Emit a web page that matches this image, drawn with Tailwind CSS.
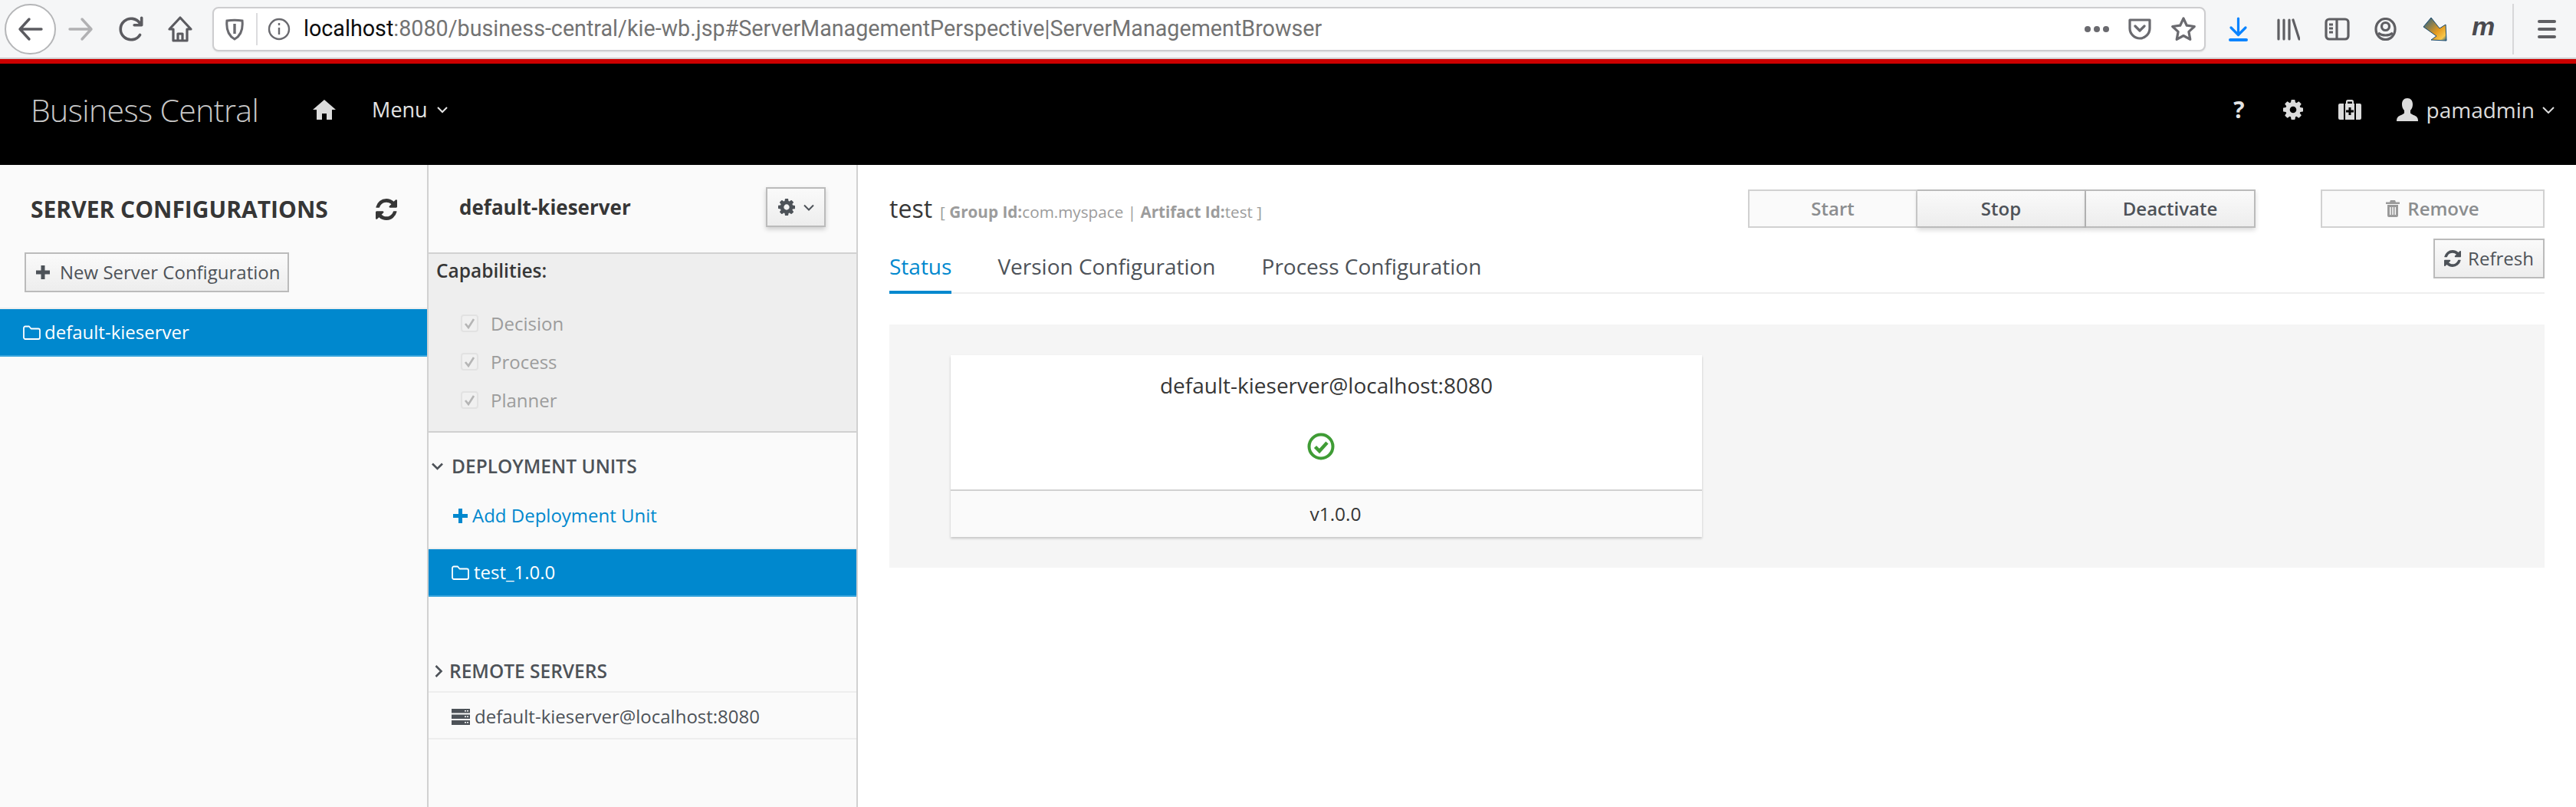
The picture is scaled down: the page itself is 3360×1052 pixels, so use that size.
<!DOCTYPE html>
<html lang="en">
<head>
  <meta charset="UTF-8">
  <title>Business Central</title>
  <script src="https://cdn.jsdelivr.net/npm/@tailwindcss/browser@4"></script>
</head>
<body class="w-[3360px] h-[1052px] overflow-hidden bg-white font-['Open_Sans',sans-serif] text-[#363636]">

  <!-- Browser toolbar -->
  <div class="h-[75px] bg-[#f5f6f7] flex items-center relative">
    <div class="ml-[6px] w-[67px] h-[66px] rounded-full border-2 border-[#b5b6b8] bg-white flex items-center justify-center">
      <svg class="w-[34px] h-[34px]" viewBox="0 0 34 34" fill="none" stroke="#5b5b60" stroke-width="3.4" stroke-linecap="round" stroke-linejoin="round"><path d="M31 17H3M15 4L3 17l12 13"/></svg>
    </div>
    <svg class="ml-[15px] w-[34px] h-[34px]" viewBox="0 0 34 34" fill="none" stroke="#b1b1b3" stroke-width="3.4" stroke-linecap="round" stroke-linejoin="round"><path d="M3 17h28M19 4l12 13-12 13"/></svg>
    <svg class="ml-[32px] w-[36px] h-[36px]" viewBox="0 0 34 34" fill="none" stroke="#5b5b60" stroke-width="3.4" stroke-linecap="round" stroke-linejoin="round"><path d="M27 24a13 13 0 1 1 0-14"/><path d="M29 3v9H20" /></svg>
    <svg class="ml-[28px] w-[34px] h-[36px]" viewBox="0 0 34 36" fill="none" stroke="#5b5b60" stroke-width="3.2" stroke-linejoin="round"><path d="M17 3L3 18h5v15h18V18h5z"/><path d="M14 33V24h6v9" /></svg>
    <div class="ml-[25px] w-[2600px] h-[58px] rounded-[8px] border-2 border-[#cdcdcf] bg-white flex items-center shadow-[0_1px_2px_rgba(0,0,0,0.08)]">
      <svg class="ml-[14px] w-[26px] h-[30px]" viewBox="0 0 26 30" fill="none" stroke="#6a6a6f" stroke-width="3"><path d="M3 4c6-1 14-1 20 0 1 10-1 19-10 24C4 23 2 14 3 4z"/><path d="M13 8v13" stroke-width="3.4"/></svg>
      <div class="ml-[15px] w-[2px] h-[42px] bg-[#dcdcde]"></div>
      <svg class="ml-[13px] w-[30px] h-[30px]" viewBox="0 0 30 30" fill="none" stroke="#6a6a6f" stroke-width="2.4"><circle cx="15" cy="15" r="13"/><path d="M15 13v9M15 7v3"/></svg>
      <div class="ml-[17px] text-[28.7px] font-['Roboto',sans-serif] text-[#737373] whitespace-nowrap"><span class="text-[#0c0c0d]">localhost</span>:8080/business-central/kie-wb.jsp#ServerManagementPerspective|ServerManagementBrowser</div>
      <div class="ml-auto flex items-center">
        <div class="flex gap-[4px]"><span class="w-[8px] h-[8px] rounded-full bg-[#6a6a6f]"></span><span class="w-[8px] h-[8px] rounded-full bg-[#6a6a6f]"></span><span class="w-[8px] h-[8px] rounded-full bg-[#6a6a6f]"></span></div>
        <svg class="ml-[24px] w-[32px] h-[30px]" viewBox="0 0 32 30" fill="none" stroke="#6a6a6f" stroke-width="3.2" stroke-linejoin="round" stroke-linecap="round"><path d="M3 3h26v11c0 7-6 13-13 13S3 21 3 14z"/><path d="M10 11l6 6 6-6"/></svg>
        <svg class="ml-[24px] mr-[10px] w-[34px] h-[34px]" viewBox="0 0 34 34" fill="none" stroke="#6a6a6f" stroke-width="3.2" stroke-linejoin="round"><path d="M17 3l4.3 9.2 10 1.3-7.4 6.9 1.9 10L17 25.500l-8.800 4.900 1.900-10-7.400-6.900 10-1.300z"/></svg>
      </div>
    </div>
    <div class="ml-[30px] flex items-center">
      <svg class="w-[25px] h-[32px]" viewBox="0 0 25 32" fill="none" stroke="#0a84ff" stroke-width="3.2" stroke-linecap="round" stroke-linejoin="round"><path d="M12.500 2v21M3 14l9.500 9.500L22 14"/><path d="M2 30h21" stroke-width="4"/></svg>
      <svg class="ml-[38px] w-[30px] h-[30px]" viewBox="0 0 30 30" fill="none" stroke="#5f5f63" stroke-width="3.200" stroke-linecap="round"><path d="M2 3v25M9 3v25M16 3v25M21 3l8 25"/></svg>
      <svg class="ml-[32px] w-[33px] h-[30px]" viewBox="0 0 33 30" fill="none" stroke="#5f5f63" stroke-width="3.200"><rect x="2" y="2" width="29" height="26" rx="4"/><path d="M16 2v26M6 9h5M6 14h5M6 19h5"/></svg>
      <svg class="ml-[32px] w-[29px] h-[30px]" viewBox="0 0 29 30" fill="none" stroke="#5f5f63" stroke-width="3.200"><ellipse cx="14.500" cy="15" rx="12.500" ry="13.500"/><circle cx="14.500" cy="11.500" r="5"/><path d="M5 20c5 4 14 4 19 0"/></svg>
      <svg class="ml-[34px] w-[32px] h-[32px]" viewBox="0 0 32 32"><defs><linearGradient id="ext" x1="0" y1="0" x2="1" y2="1"><stop offset="0" stop-color="#1c5d8a"/><stop offset="0.6" stop-color="#e59a1e"/><stop offset="0.85" stop-color="#f7c64a"/><stop offset="1" stop-color="#1c5d8a"/></linearGradient></defs><path d="M1 13L11 1l11 14 8-5 1 21-20-1 7-5z" fill="url(#ext)" stroke="#174a72" stroke-width="1"/></svg>
      <div class="ml-[32px] w-[32px] text-[34px] leading-none font-bold italic text-[#4a4a4f] font-['Liberation_Sans',sans-serif] -mt-[8px]">m</div>
      <div class="ml-[21px] w-[2px] h-[66px] bg-[#d7d7d9]"></div>
      <div class="ml-[31px] w-[24px] flex flex-col gap-[6px]"><span class="h-[4px] rounded bg-[#5f5f63]"></span><span class="h-[4px] rounded bg-[#5f5f63]"></span><span class="h-[4px] rounded bg-[#5f5f63]"></span></div>
    </div>
  </div>
  <div class="h-[2px] bg-[#cfcfd1]"></div>
  <div class="h-[6px] bg-[#cc0000]"></div>

  <!-- App header -->
  <div class="h-[132px] pb-[12px] bg-black flex items-center text-[#d1d1d1]">
    <div class="ml-[40px] text-[41px] font-light tracking-[-0.6px] leading-none text-[#c9c9c9]">Business Central</div>
    <svg class="ml-[71px] w-[30px] h-[26px]" viewBox="0 0 30 26" fill="#dcdcdc"><path d="M15 0L0 13h5v13h7v-8h6v8h7V13h5z"/></svg>
    <div class="ml-[47px] text-[27px] text-[#e4e4e4]">Menu</div>
    <svg class="ml-[12px] w-[14px] h-[10px]" viewBox="0 0 14 10" fill="none" stroke="#e4e4e4" stroke-width="2"><path d="M1 2l6 6 6-6"/></svg>
    <div class="ml-auto flex items-center">
      <div class="text-[30px] font-bold leading-none text-[#e4e4e4]">?</div>
      <svg class="ml-[50px] w-[26px] h-[26px]" viewBox="128 128 1536 1536" fill="#dcdcdc"><path d="M1152 896q0-106-75-181t-181-75-181 75-75 181 75 181 181 75 181-75 75-181zm512-109v222q0 12-8 23t-20 13l-185 28q-19 54-39 91 35 50 107 138 10 12 10 25t-9 23q-27 37-99 108t-94 71q-12 0-26-9l-138-108q-44 23-91 38-16 136-29 186-7 28-36 28h-222q-14 0-24.5-8.5t-11.5-21.5l-28-184q-49-16-90-37l-141 107q-10 9-25 9-14 0-25-11-126-114-165-168-7-10-7-23 0-12 8-23 15-21 51-66.5t54-70.5q-27-50-41-99l-183-27q-13-2-21-12.5t-8-23.5v-222q0-12 8-23t19-13l186-28q14-46 39-92-40-57-107-138-10-12-10-24 0-10 9-23 26-36 98.5-107.5t94.5-71.5q13 0 26 10l138 107q44-23 91-38 16-136 29-186 7-28 36-28h222q14 0 24.5 8.5t11.5 21.5l28 184q49 16 90 37l142-107q9-9 24-9 13 0 25 10 129 119 165 170 7 8 7 22 0 12-8 23-15 21-51 66.5t-54 70.5q26 50 41 98l183 28q13 2 21 12.5t8 23.5z"/></svg>
      <svg class="ml-[46px] w-[30px] h-[26px]" viewBox="0 0 30 26" fill="#dcdcdc"><path d="M10 5V2.500A2.500 2.500 0 0 1 12.500 0h5A2.500 2.500 0 0 1 20 2.500V5h1v21H9V5zM12 5h6V2.500h-6zM2 5h5v21H2a2 2 0 0 1-2-2V7a2 2 0 0 1 2-2zM23 5h5a2 2 0 0 1 2 2v17a2 2 0 0 1-2 2h-5z"/><path d="M13.500 10h3v3.500H20v3h-3.500V20h-3v-3.500H10v-3h3.500z" fill="#000"/></svg>
      <svg class="ml-[46px] w-[28px] h-[30px]" viewBox="0 0 28 30" fill="#dcdcdc"><path d="M14 0c4.500 0 7 3 7 8 0 3-1 6-3 8v3c0 1 1 1.500 4 3 4 1.500 6 3 6 8H0c0-5 2-6.500 6-8 3-1.500 4-2 4-3v-3c-2-2-3-5-3-8 0-5 2.500-8 7-8z"/></svg>
      <div class="ml-[11px] text-[28px] text-[#dcdcdc]">pamadmin</div>
      <svg class="ml-[10px] mr-[28px] w-[16px] h-[10px]" viewBox="0 0 16 10" fill="none" stroke="#dcdcdc" stroke-width="2"><path d="M1 2l7 7 7-7"/></svg>
    </div>
  </div>

  <div class="flex h-[837px]">
    <!-- Server list -->
    <div class="w-[559px] shrink-0 bg-[#fafafa] border-r-2 border-[#d1d1d1]">
      <div class="h-[114px] flex items-center pl-[40px] pr-[39px] pt-[2px]">
        <div class="text-[30px] font-bold leading-none">SERVER CONFIGURATIONS</div>
        <svg class="ml-auto w-[28px] h-[28px]" viewBox="128 128 1536 1536" fill="#363636"><path d="M1639 1056q0 5-1 7-64 268-268 434.5t-478 166.5q-146 0-282.5-55t-243.5-157l-129 129q-19 19-45 19t-45-19-19-45v-448q0-26 19-45t45-19h448q26 0 45 19t19 45-19 45l-137 137q71 66 161 102t187 36q134 0 250-65t186-179q11-17 53-117 8-23 30-23h192q13 0 22.5 9.5t9.5 22.5zm25-800v448q0 26-19 45t-45 19h-448q-26 0-45-19t-19-45 19-45l138-138q-148-137-349-137-134 0-250 65t-186 179q-11 17-53 117-8 23-30 23h-199q-13 0-22.5-9.5t-9.5-22.5v-7q65-268 270-434.5t480-166.5q146 0 284 55.5t245 156.5l130-129q19-19 45-19t45 19 19 45z"/></svg>
      </div>
      <button class="ml-[32px] w-[345px] h-[52px] border-2 border-[#bbb] bg-linear-to-b from-[#fafafa] to-[#ededed] flex items-center pl-[12px] text-[24px] text-[#4d5258] leading-none whitespace-nowrap">
        <svg class="w-[20px] h-[20px] mr-[12px]" viewBox="0 0 20 20" fill="#4d5258"><path d="M7.500 1h5v6.500H19v5h-6.500V19h-5v-6.500H1v-5h6.500z"/></svg>New Server Configuration
      </button>
      <div class="mt-[20px] h-[2px] bg-[#eeeeee]"></div>
      <div class="h-[62px] bg-[#0088ce] border-b-2 border-[#39a5dc] flex items-center pl-[30px] text-[24px] text-white">
        <svg class="w-[23px] h-[19px] mr-[5px]" viewBox="0 0 23 19" fill="none" stroke="#fff" stroke-width="1.800" stroke-linejoin="round"><path d="M1 3.500A2 2 0 0 1 3 1.500h5l2.500 3H20a2 2 0 0 1 2 2V16a2 2 0 0 1-2 2H3a2 2 0 0 1-2-2z"/></svg>default-kieserver
      </div>
    </div>

    <!-- Server details -->
    <div class="w-[560px] shrink-0 bg-[#fafafa] border-r-2 border-[#d1d1d1]">
      <div class="h-[116px] flex items-center pl-[40px] border-b-2 border-[#d1d1d1]">
        <div class="text-[26px] font-bold -mt-[4px]">default-kieserver</div>
        <button class="ml-auto mr-[40px] -mt-[4px] w-[78px] h-[52px] border-2 border-[#bbb] bg-linear-to-b from-[#fafafa] to-[#ededed] shadow-[0_3px_6px_rgba(0,0,0,0.18)] flex items-center justify-center">
          <svg class="w-[22px] h-[22px]" viewBox="128 128 1536 1536" fill="#4d5258"><path d="M1152 896q0-106-75-181t-181-75-181 75-75 181 75 181 181 75 181-75 75-181zm512-109v222q0 12-8 23t-20 13l-185 28q-19 54-39 91 35 50 107 138 10 12 10 25t-9 23q-27 37-99 108t-94 71q-12 0-26-9l-138-108q-44 23-91 38-16 136-29 186-7 28-36 28h-222q-14 0-24.5-8.5t-11.5-21.5l-28-184q-49-16-90-37l-141 107q-10 9-25 9-14 0-25-11-126-114-165-168-7-10-7-23 0-12 8-23 15-21 51-66.5t54-70.5q-27-50-41-99l-183-27q-13-2-21-12.5t-8-23.5v-222q0-12 8-23t19-13l186-28q14-46 39-92-40-57-107-138-10-12-10-24 0-10 9-23 26-36 98.5-107.5t94.5-71.5q13 0 26 10l138 107q44-23 91-38 16-136 29-186 7-28 36-28h222q14 0 24.5 8.5t11.5 21.5l28 184q49 16 90 37l142-107q9-9 24-9 13 0 25 10 129 119 165 170 7 8 7 22 0 12-8 23-15 21-51 66.5t-54 70.5q26 50 41 98l183 28q13 2 21 12.5t8 23.5z"/></svg>
          <svg class="ml-[11px] w-[14px] h-[9px]" viewBox="0 0 14 9" fill="none" stroke="#4d5258" stroke-width="2"><path d="M1 1.500l6 6 6-6"/></svg>
        </button>
      </div>
      <div class="h-[233px] bg-[#eeeeee] border-b-2 border-[#d1d1d1] pl-[10px]">
        <div class="pt-[4px] text-[24.5px] font-semibold leading-[36px]">Capabilities:</div>
        <div class="mt-[39px] ml-[32px] flex flex-col gap-[27px] text-[24px] text-[#9c9c9c] leading-[23px]">
          <div class="flex items-center h-[23px]"><span class="w-[23px] h-[23px] rounded-[4px] border-2 border-[#e2e2e2] bg-[#f0f0f0] flex items-center justify-center"><svg class="w-[15px] h-[15px]" viewBox="0 0 15 15" fill="none" stroke="#b5b5b5" stroke-width="2.600"><path d="M2 8l4 5 7-11"/></svg></span><span class="ml-[16px]">Decision</span></div>
          <div class="flex items-center h-[23px]"><span class="w-[23px] h-[23px] rounded-[4px] border-2 border-[#e2e2e2] bg-[#f0f0f0] flex items-center justify-center"><svg class="w-[15px] h-[15px]" viewBox="0 0 15 15" fill="none" stroke="#b5b5b5" stroke-width="2.600"><path d="M2 8l4 5 7-11"/></svg></span><span class="ml-[16px]">Process</span></div>
          <div class="flex items-center h-[23px]"><span class="w-[23px] h-[23px] rounded-[4px] border-2 border-[#e2e2e2] bg-[#f0f0f0] flex items-center justify-center"><svg class="w-[15px] h-[15px]" viewBox="0 0 15 15" fill="none" stroke="#b5b5b5" stroke-width="2.600"><path d="M2 8l4 5 7-11"/></svg></span><span class="ml-[16px]">Planner</span></div>
        </div>
      </div>
      <div class="h-[56px] flex items-end pl-[4px] text-[24.5px] font-semibold text-[#4d5258] leading-none">
        <svg class="w-[15px] h-[10px] mb-[7px]" viewBox="0 0 15 10" fill="none" stroke="#4d5258" stroke-width="2.600"><path d="M1 1.500l6.500 6.500 6.500-6.500"/></svg>
        <span class="ml-[11px]">DEPLOYMENT UNITS</span>
      </div>
      <div class="h-[96px] flex items-center pl-[32px] pt-[10px] text-[24px] text-[#0088ce] border-b-2 border-[#eeeeee]">
        <svg class="w-[19px] h-[19px] mr-[6px]" viewBox="0 0 19 19" fill="#0088ce"><path d="M7 0h5v7h7v5h-7v7H7v-7H0V7h7z"/></svg>Add Deployment Unit
      </div>
      <div class="h-[62px] bg-[#0088ce] border-b-2 border-[#39a5dc] flex items-center pl-[30px] text-[24px] text-white">
        <svg class="w-[23px] h-[19px] mr-[6px]" viewBox="0 0 23 19" fill="none" stroke="#fff" stroke-width="1.800" stroke-linejoin="round"><path d="M1 3.500A2 2 0 0 1 3 1.500h5l2.500 3H20a2 2 0 0 1 2 2V16a2 2 0 0 1-2 2H3a2 2 0 0 1-2-2z"/></svg>test_1.0.0
      </div>
      <div class="h-[125px] flex items-center pl-[8px] pt-[71px] text-[24.5px] font-semibold text-[#4d5258] leading-none border-b-2 border-[#eeeeee]">
        <svg class="w-[11px] h-[16px]" viewBox="0 0 11 16" fill="none" stroke="#4d5258" stroke-width="2.600"><path d="M1.500 1l7 7-7 7"/></svg>
        <span class="ml-[8px]">REMOTE SERVERS</span>
      </div>
      <div class="h-[61px] flex items-center pl-[30px] pt-[3px] text-[24px] text-[#4d5258] border-b-2 border-[#eeeeee]">
        <svg class="w-[24px] h-[21px] mr-[6px]" viewBox="0 0 24 21" fill="#4d5258"><path d="M0 0h24v5.500H0zM0 7.500h24V13H0zM0 15h24v6H0z"/><path d="M17 2h2v1.500h-2zM20 2h2v1.500h-2zM17 9.500h2V11h-2zM20 9.500h2V11h-2zM17 17h2v1.500h-2zM20 17h2v1.500h-2z" fill="#fafafa"/></svg>default-kieserver@localhost:8080
      </div>
    </div>

    <!-- Container details -->
    <div class="flex-1 px-[41px]">
      <div class="relative h-[168px] border-b-2 border-[#eeeeee]">
        <div class="flex items-baseline pt-[41px] leading-none">
          <span class="text-[32px] text-[#363636]">test</span>
          <span class="ml-[10px] text-[20.7px] text-[#9c9c9c]">[ <b>Group Id:</b>com.myspace | <b>Artifact Id:</b>test ]</span>
        </div>
        <div class="absolute right-0 top-[32px] flex items-start">
          <div class="flex mr-[85px] text-[24px] leading-none">
            <button class="w-[221px] h-[50px] border-2 border-[#d1d1d1] bg-[#fafafa] text-[#8b8d8f] font-semibold">Start</button>
            <button class="w-[220px] h-[50px] border-2 border-l-0 border-[#bbb] bg-linear-to-b from-[#fafafa] to-[#ededed] text-[#4d5258] font-semibold shadow-[0_3px_6px_rgba(0,0,0,0.15)]">Stop</button>
            <button class="w-[221px] h-[50px] border-2 border-l-0 border-[#bbb] bg-linear-to-b from-[#fafafa] to-[#ededed] text-[#4d5258] font-semibold shadow-[0_3px_6px_rgba(0,0,0,0.15)]">Deactivate</button>
          </div>
          <div class="flex flex-col items-end gap-[14px]">
            <button class="w-[292px] h-[50px] border-2 border-[#d1d1d1] bg-[#fafafa] text-[#8b8d8f] text-[24px] font-semibold leading-none flex items-center justify-center">
              <svg class="w-[18px] h-[22px] mr-[10px]" viewBox="0 0 18 22" fill="#9a9a9a"><path d="M6 0h6l1 2.500h5V5H0V2.500h5zM2 6h14v14a2 2 0 0 1-2 2H4a2 2 0 0 1-2-2zm3 3v10h1.500V9zm3.250 0v10h1.500V9zM11.500 9v10H13V9z"/></svg>Remove
            </button>
            <button class="w-[145px] h-[52px] border-2 border-[#bbb] bg-linear-to-b from-[#fafafa] to-[#ededed] text-[#4d5258] text-[24px] leading-none flex items-center justify-center">
              <svg class="w-[22px] h-[22px] mr-[9px]" viewBox="128 128 1536 1536" fill="#4d5258"><path d="M1639 1056q0 5-1 7-64 268-268 434.5t-478 166.5q-146 0-282.5-55t-243.5-157l-129 129q-19 19-45 19t-45-19-19-45v-448q0-26 19-45t45-19h448q26 0 45 19t19 45-19 45l-137 137q71 66 161 102t187 36q134 0 250-65t186-179q11-17 53-117 8-23 30-23h192q13 0 22.5 9.5t9.5 22.5zm25-800v448q0 26-19 45t-45 19h-448q-26 0-45-19t-19-45 19-45l138-138q-148-137-349-137-134 0-250 65t-186 179q-11 17-53 117-8 23-30 23h-199q-13 0-22.5-9.5t-9.5-22.5v-7q65-268 270-434.5t480-166.5q146 0 284 55.5t245 156.5l130-129q19-19 45-19t45 19 19 45z"/></svg>Refresh
            </button>
          </div>
        </div>
        <div class="absolute left-0 bottom-[-2px] flex text-[28px] leading-none text-[#4d5258]">
          <div class="h-[50px] border-b-4 border-[#0088ce] text-[#0088ce]">Status</div>
          <div class="ml-[60px]">Version Configuration</div>
          <div class="ml-[60px]">Process Configuration</div>
        </div>
      </div>
      <div class="mt-[40px] h-[317px] bg-[#f5f5f5] pt-[40px] pl-[80px]">
        <div class="w-[980px] h-[237px] bg-white shadow-[0_2px_3px_rgba(0,0,0,0.2)]">
          <div class="h-[177px] border-b-2 border-[#d1d1d1] flex flex-col items-center text-[28px] text-[#363636]">
            <div class="mt-[19px] leading-[40px]">default-kieserver@localhost:8080</div>
            <svg class="mt-[42px] -ml-[14px] w-[36px] h-[36px]" viewBox="0 0 36 36" fill="none" stroke="#3f9c35"><circle cx="18" cy="18" r="15.500" stroke-width="4"/><path d="M10.500 18.500l5.500 5.500 10-11" stroke-width="4.500"/></svg>
          </div>
          <div class="h-[60px] bg-[#fafafa] flex items-center justify-center pl-[24px] text-[24.5px] text-[#363636]">v1.0.0</div>
        </div>
      </div>
    </div>
  </div>
</body>
</html>
